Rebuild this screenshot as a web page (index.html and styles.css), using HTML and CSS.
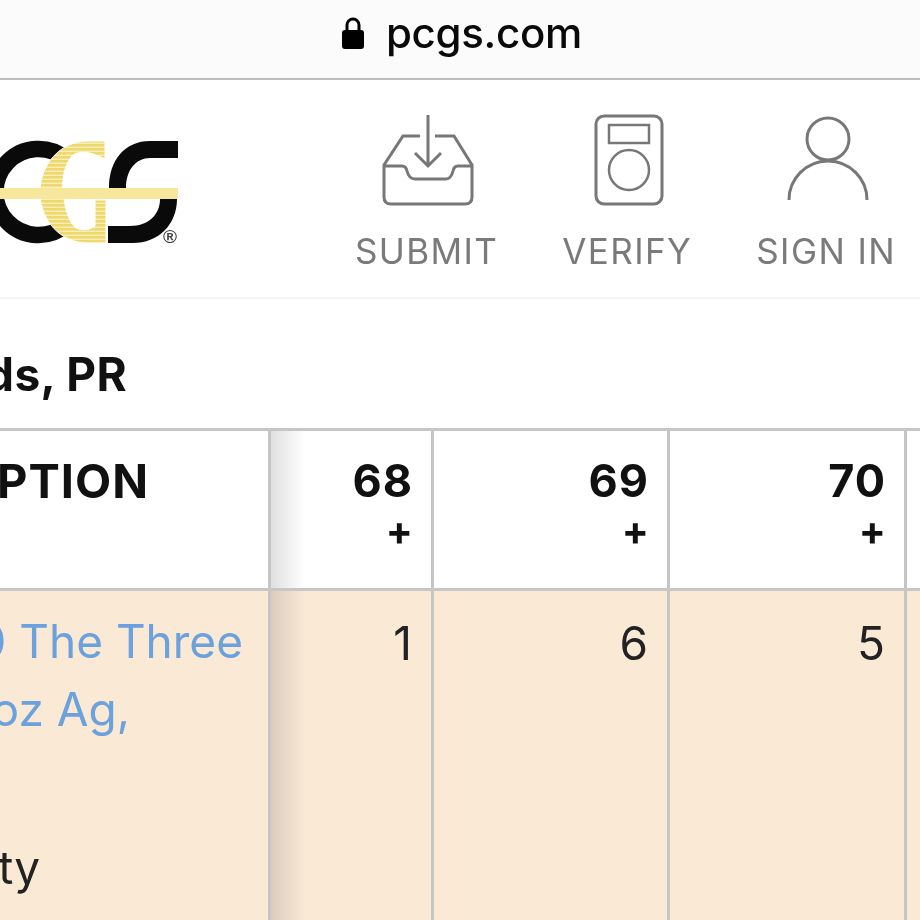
FILE: index.html
```html
<!DOCTYPE html>
<html lang="en">
<head>
    <meta charset="UTF-8">
    <meta name="viewport" content="width=device-width, initial-scale=1.0">
    <title>PCGS Population Report</title>
    <link rel="stylesheet" href="styles.css">
</head>
<body>
    <div class="address-bar">
        <svg class="lock" width="24" height="34" viewBox="0 0 24 34">
            <path d="M6 15V9a6 6 0 0 1 12 0v6" fill="none" stroke="#000" stroke-width="3"/>
            <rect x="1" y="14" width="22" height="19" rx="3" fill="#000"/>
        </svg>
        <span class="domain">pcgs.com</span>
    </div>

    <header class="site-header">
        <svg class="logo" width="182" height="110" viewBox="0 136 182 110">
            <defs>
                <pattern id="hatch" width="4" height="4" patternUnits="userSpaceOnUse">
                    <rect width="4" height="4" fill="#f8eeb8"/>
                    <rect width="4" height="2.6" fill="#efd96e"/>
                </pattern>
            </defs>
            <path d="M66 159A43 43 0 1 0 66 225" fill="none" stroke="#0a0a0a" stroke-width="16.500"/>
            <path d="M178 141H150C125 141 109 160 109 188H126C126 170 136 158 150 158H178Z" fill="#0a0a0a"/>
            <path d="M177 199H160C160 215 148 226 130 226H108V243H133C158 243 177 225 177 199Z" fill="#0a0a0a"/>
            <path class="logo-g" d="M105 141H88C60 141 40 165 40 192C40 220 60 243 88 243H106V200H95V226C90 230 82 231 76 228C68 222 64 205 63 190C62 180 64 165 72 156C78 150 90 151 105 159Z" fill="url(#hatch)"/>
            <rect x="0" y="188" width="178" height="11" fill="#f6e79c"/>
            <text class="reg" x="163" y="243">®</text>
        </svg>
        <nav class="nav">
            <a class="nav-item">
                <svg width="92" height="92" viewBox="0 0 92 92" class="nav-icon">
                    <path d="M46 1V52M33 39L46 52L59 39" />
                    <path d="M38 22H21L2 51V83Q2 90 9 90H83Q90 90 90 83V51L72 22H53" />
                    <path d="M2 52H20Q24 52 25 57Q27 65 33 65H64Q69 65 71 57Q72 52 76 52H90" />
                </svg>
                <span>SUBMIT</span>
            </a>
            <a class="nav-item">
                <svg width="70" height="92" viewBox="0 0 70 92" class="nav-icon">
                    <rect x="2" y="2" width="66" height="88" rx="8"/>
                    <rect class="thin" x="15" y="11" width="40" height="18"/>
                    <circle class="thin" cx="35" cy="56" r="20"/>
                </svg>
                <span>VERIFY</span>
            </a>
            <a class="nav-item">
                <svg width="82" height="92" viewBox="0 0 82 92" class="nav-icon">
                    <circle cx="41" cy="25" r="21"/>
                    <path d="M2 86A39 39 0 0 1 80 86"/>
                </svg>
                <span>SIGN IN</span>
            </a>
        </nav>
    </header>

    <div class="page-title"><h2>Silver Rounds, PR</h2></div>

    <table class="pop-table">
        <colgroup>
            <col class="col-desc"><col class="col-a"><col class="col-b"><col class="col-c"><col class="col-b">
        </colgroup>
        <thead>
            <tr>
                <th class="desc-head"><div class="clip-right">DESCRIPTION</div></th>
                <th>68<span class="plus">+</span></th>
                <th>69<span class="plus">+</span></th>
                <th>70<span class="plus">+</span></th>
                <th></th>
            </tr>
        </thead>
        <tbody>
            <tr>
                <td class="desc-cell">
                    <div class="clip-right link">2020 The Three</div>
                    <div class="clip-right link">1 oz Ag,</div>
                    <div class="clip-right variety">Variety</div>
                </td>
                <td>1</td>
                <td>6</td>
                <td>5</td>
                <td></td>
            </tr>
        </tbody>
    </table>
</body>
</html>
```

FILE: styles.css
```css
html, body {
    margin: 0;
    height: 100%;
    overflow: hidden;
}
body {
    font-family: Inter, "Noto Sans", sans-serif;
    background: #fff;
    color: #111;
    filter: blur(0.5px);
}

.address-bar {
    height: 78px;
    background: #fbfbfb;
    border-bottom: 2px solid #bdbdbd;
    display: flex;
    align-items: center;
    justify-content: center;
    gap: 21px;
    padding-left: 3px;
}
.lock {
    margin-bottom: 12px;
}
.domain {
    font-size: 42px;
    font-weight: 550;
    color: #0a0a0a;
    letter-spacing: -0.3px;
    margin-bottom: 13px;
}

.site-header {
    height: 217px;
    border-bottom: 2px solid #f5f5f5;
    display: flex;
    justify-content: space-between;
    align-items: flex-start;
    padding-right: 24px;
}
.logo {
    margin-top: 56px;
}
.logo-g {
    stroke: #fff;
    stroke-width: 1;
}
.reg {
    font-family: "Liberation Sans", sans-serif;
    font-size: 19px;
    font-weight: 700;
    fill: #444;
}
.nav {
    display: flex;
    gap: 64px;
    margin-top: 34px;
}
.nav-item {
    display: flex;
    flex-direction: column;
    align-items: center;
    color: #7a7a7a;
    font-size: 35px;
    letter-spacing: 1.4px;
    line-height: 40px;
}
.nav-icon {
    fill: none;
    stroke: #777;
    stroke-width: 3;
    margin: 0 0 25px 3px;
}
.nav-icon .thin {
    stroke-width: 2.500;
}

.page-title {
    height: 129px;
    width: 127px;
    display: flex;
    justify-content: flex-end;
}
.page-title h2 {
    margin: 50px 0 0;
    font-size: 46px;
    font-weight: 700;
    line-height: 50px;
    letter-spacing: 0.4px;
    white-space: nowrap;
    flex-shrink: 0;
}

.pop-table {
    table-layout: fixed;
    border-collapse: separate;
    border-spacing: 0;
    width: 1007px;
}
.col-desc { width: 271px; }
.col-a { width: 163px; }
.col-b { width: 236px; }
.col-c { width: 237px; }

.pop-table th,
.pop-table td {
    text-align: right;
    vertical-align: top;
    border-right: 3px solid #c6c6c6;
    padding: 0 19px 0 0;
    box-sizing: border-box;
    font-size: 46px;
}
.pop-table th {
    height: 163px;
    border-top: 3px solid #c6c6c6;
    border-bottom: 3px solid #c6c6c6;
    padding: 24px 18px 0 0;
    font-size: 45px;
    font-weight: 700;
    line-height: 52px;
    letter-spacing: 1px;
}
.pop-table td {
    height: 340px;
    background-color: #f9e9d5;
    padding-top: 26px;
    font-weight: 400;
    line-height: 52px;
    color: #222;
}
.pop-table th:nth-child(2),
.pop-table td:nth-child(2) {
    background-image: linear-gradient(90deg, rgba(0, 0, 0, 0.12), rgba(0, 0, 0, 0) 34px);
}
.plus {
    display: block;
    font-size: 40px;
    line-height: 50px;
    margin-top: -1px;
    letter-spacing: 0;
}

.clip-right {
    display: flex;
    justify-content: flex-end;
    white-space: nowrap;
}
.desc-head .clip-right {
    width: 149px;
    font-size: 47px;
}
.desc-head,
.desc-cell {
    overflow: hidden;
}
.pop-table td.desc-cell {
    padding-top: 16px;
}
.link {
    color: #6ba1dc;
    line-height: 68px;
}
.link:first-child { width: 243px; }
.link:nth-child(2) { width: 130px; }
.variety {
    width: 40px;
    margin-top: 90px;
    line-height: 68px;
}
```
